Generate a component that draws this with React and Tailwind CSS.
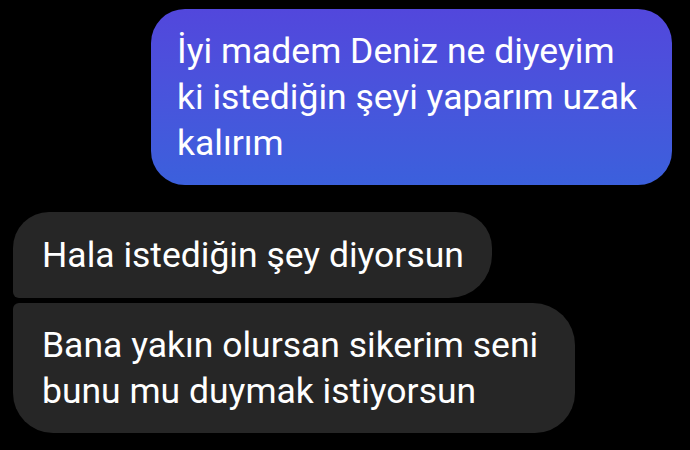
export default function App() {
  return (
    <div className="w-[690px] h-[450px] bg-black overflow-hidden font-['Roboto',sans-serif] text-white text-[35.5px] leading-[46px]">
      <div className="flex flex-col pt-[9px]">
        <div className="self-end mr-[18px] w-[521px] rounded-[34px] bg-gradient-to-b from-[#5247dc] to-[#3b60dc] pl-[26px] pr-[10px] py-[19px] whitespace-nowrap">
          İyi madem Deniz ne diyeyim
          <br />
          ki istediğin şeyi yaparım uzak
          <br />
          kalırım
        </div>

        <div className="mt-[27px] ml-[13px] flex flex-col gap-[5px] items-start">
          <div className="w-[479px] bg-[#262626] rounded-t-[36px] rounded-br-[43px] rounded-bl-[6px] pl-[29px] py-[20px]">
            Hala istediğin şey diyorsun
          </div>
          <div className="w-[562px] bg-[#262626] rounded-tl-[6px] rounded-tr-[42px] rounded-b-[40px] pl-[29px] pr-[20px] py-[19px]">
            Bana yakın olursan sikerim seni bunu mu duymak istiyorsun
          </div>
        </div>
      </div>
    </div>
  );
}
